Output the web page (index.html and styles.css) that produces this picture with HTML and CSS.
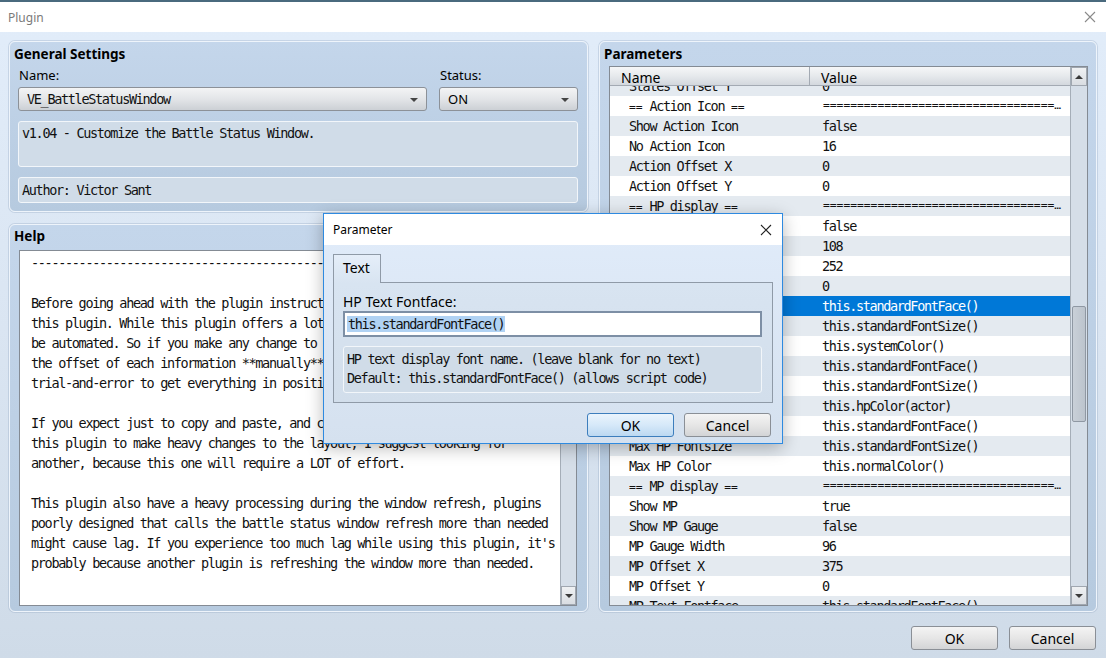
FILE: index.html
```html
<!DOCTYPE html>
<html>
<head>
<meta charset="utf-8">
<link rel="stylesheet" href="styles.css">
</head>
<body>
<div class="titlebar">
  <span class="title-text">Plugin</span>
  <svg class="close" width="12" height="12" viewBox="0 0 12 12"><path d="M1 1L11 11M11 1L1 11" stroke="#8a8a8a" stroke-width="1.1" fill="none"/></svg>
</div>
<div class="content">
  <div class="left">
    <section class="panel general">
      <div class="panel-title">General Settings</div>
      <div class="fields">
        <div class="field name-field">
          <div class="label">Name:</div>
          <div class="combo mono">VE_BattleStatusWindow<span class="drop"></span></div>
        </div>
        <div class="field status-field">
          <div class="label">Status:</div>
          <div class="combo">ON<span class="drop"></span></div>
        </div>
      </div>
      <div class="infobox desc mono">v1.04 - Customize the Battle Status Window.</div>
      <div class="infobox author mono">Author: Victor Sant</div>
    </section>
    <section class="panel help">
      <div class="panel-title">Help</div>
      <div class="textarea">
        <div class="help-text mono">----------------------------------------------------------------------------

Before going ahead with the plugin instructions, it's important to know that
this plugin. While this plugin offers a lot of options, many things can't
be automated. So if you make any change to the layout, you will need to set
the offset of each information **manually**. So be prepared to do a lot of
trial-and-error to get everything in position.

If you expect just to copy and paste, and change a few values, or want to use
this plugin to make heavy changes to the layout, I suggest looking for
another, because this one will require a LOT of effort.

This plugin also have a heavy processing during the window refresh, plugins
poorly designed that calls the battle status window refresh more than needed
might cause lag. If you experience too much lag while using this plugin, it's
probably because another plugin is refreshing the window more than needed.</div>
        <div class="vscroll small">
          <div class="track"></div>
          <div class="sbtn"><span class="tri down"></span></div>
        </div>
      </div>
    </section>
  </div>
  <section class="panel params">
    <div class="panel-title">Parameters</div>
    <div class="table">
      <div class="table-main">
        <div class="thead">
          <div class="th th-name">Name</div>
          <div class="th th-value">Value</div>
        </div>
        <div class="tbody mono">
          <div class="rows">
            <div class="row alt"><span class="c-name">States Offset Y</span><span class="c-val">0</span></div>
            <div class="row"><span class="c-name"><span class="eq">==</span> Action Icon <span class="eq">==</span></span><span class="c-val eq">============================================================</span></div>
            <div class="row alt"><span class="c-name">Show Action Icon</span><span class="c-val">false</span></div>
            <div class="row"><span class="c-name">No Action Icon</span><span class="c-val">16</span></div>
            <div class="row alt"><span class="c-name">Action Offset X</span><span class="c-val">0</span></div>
            <div class="row"><span class="c-name">Action Offset Y</span><span class="c-val">0</span></div>
            <div class="row alt"><span class="c-name"><span class="eq">==</span> HP display <span class="eq">==</span></span><span class="c-val eq">============================================================</span></div>
            <div class="row"><span class="c-name">Show HP Gauge</span><span class="c-val">false</span></div>
            <div class="row alt"><span class="c-name">HP Gauge Width</span><span class="c-val">108</span></div>
            <div class="row"><span class="c-name">HP Offset X</span><span class="c-val">252</span></div>
            <div class="row alt"><span class="c-name">HP Offset Y</span><span class="c-val">0</span></div>
            <div class="row selected"><span class="c-name">HP Text Fontface</span><span class="c-val">this.standardFontFace()</span></div>
            <div class="row alt"><span class="c-name">HP Text Fontsize</span><span class="c-val">this.standardFontSize()</span></div>
            <div class="row"><span class="c-name">HP Text Color</span><span class="c-val">this.systemColor()</span></div>
            <div class="row alt"><span class="c-name">HP Value Fontface</span><span class="c-val">this.standardFontFace()</span></div>
            <div class="row"><span class="c-name">HP Value Fontsize</span><span class="c-val">this.standardFontSize()</span></div>
            <div class="row alt"><span class="c-name">HP Value Color</span><span class="c-val">this.hpColor(actor)</span></div>
            <div class="row"><span class="c-name">Max HP Fontface</span><span class="c-val">this.standardFontFace()</span></div>
            <div class="row alt"><span class="c-name">Max HP Fontsize</span><span class="c-val">this.standardFontSize()</span></div>
            <div class="row"><span class="c-name">Max HP Color</span><span class="c-val">this.normalColor()</span></div>
            <div class="row alt"><span class="c-name"><span class="eq">==</span> MP display <span class="eq">==</span></span><span class="c-val eq">============================================================</span></div>
            <div class="row"><span class="c-name">Show MP</span><span class="c-val">true</span></div>
            <div class="row alt"><span class="c-name">Show MP Gauge</span><span class="c-val">false</span></div>
            <div class="row"><span class="c-name">MP Gauge Width</span><span class="c-val">96</span></div>
            <div class="row alt"><span class="c-name">MP Offset X</span><span class="c-val">375</span></div>
            <div class="row"><span class="c-name">MP Offset Y</span><span class="c-val">0</span></div>
            <div class="row alt"><span class="c-name">MP Text Fontface</span><span class="c-val">this.standardFontFace()</span></div>
          </div>
        </div>
      </div>
      <div class="vscroll">
        <div class="sbtn"><span class="tri up"></span></div>
        <div class="track"><div class="thumb"></div></div>
        <div class="sbtn"><span class="tri down"></span></div>
      </div>
    </div>
  </section>
</div>
<div class="footer">
  <button class="btn">OK</button>
  <button class="btn">Cancel</button>
</div>

<div class="dialog">
  <div class="dlg-titlebar">
    <span class="dlg-title">Parameter</span>
    <svg class="close" width="12" height="12" viewBox="0 0 12 12"><path d="M1 1L11 11M11 1L1 11" stroke="#222" stroke-width="1.1" fill="none"/></svg>
  </div>
  <div class="dlg-body">
    <div class="tabs"><div class="tab">Text</div></div>
    <div class="tabpanel">
      <div class="dlg-label">HP Text Fontface:</div>
      <div class="input mono"><span class="sel">this.standardFontFace()</span></div>
      <div class="infobox dlg-desc mono">HP text display font name. (leave blank for no text)
Default: this.standardFontFace() (allows script code)</div>
    </div>
    <div class="dlg-buttons">
      <button class="btn default">OK</button>
      <button class="btn">Cancel</button>
    </div>
  </div>
</div>
</body>
</html>
```

FILE: styles.css
```css
* { box-sizing: border-box; }
html, body { margin: 0; padding: 0; }
body {
  width: 1106px;
  height: 658px;
  overflow: hidden;
  position: relative;
  font-family: "Noto Sans", "Open Sans", sans-serif;
  color: #000;
  background: linear-gradient(#e2edfa 0%, #dae5f2 50%, #cfdbe8 100%);
}
.mono {
  font-family: "DejaVu Sans Mono", monospace;
  font-size: 13.5px;
  letter-spacing: -1.33px;
  color: #111;
}
.eq {
  font-size: 11.3px;
  letter-spacing: 0;
}
.titlebar {
  height: 32px;
  background: #fff;
  border-top: 2px solid #4a6a7e;
  display: flex;
  align-items: center;
  justify-content: space-between;
  padding: 0 10px 0 8px;
}
.title-text { font-size: 12px; color: #7a7a7a; }
.content {
  display: flex;
  gap: 11px;
  padding: 9px 9px 0 9px;
  height: 580px;
}
.left {
  width: 579px;
  display: flex;
  flex-direction: column;
  gap: 12px;
}
.panel {
  background: linear-gradient(#c4d6eb, #b6cadf);
  border: 1px solid #eef4fb;
  border-radius: 6px;
  box-shadow: 0 0 0 1px rgba(150,170,195,0.35);
}
.panel-title {
  font-weight: 700;
  font-size: 13.5px;
  height: 24px;
  line-height: 24px;
  margin-left: -4px;
}
.general { height: 171px; padding: 0 9px 8px 8px; }
.fields { display: flex; gap: 12px; }
.name-field { width: 409px; }
.status-field { width: 139px; }
.label { font-size: 13px; height: 20px; line-height: 18px; padding-left: 1px; }
.combo {
  height: 24px;
  margin-top: 1px;
  border: 1px solid #8c9198;
  border-radius: 3px;
  background: linear-gradient(#f3f4f5, #e3e5e8 50%, #ccd0d5);
  padding-left: 8px;
  line-height: 22px;
  font-size: 13px;
  position: relative;
}
.combo.mono { font-size: 13.5px; }
.drop {
  position: absolute;
  right: 8px;
  top: 10px;
  width: 0; height: 0;
  border-left: 4px solid transparent;
  border-right: 4px solid transparent;
  border-top: 4px solid #444;
}
.infobox {
  background: #d0dce8;
  border: 1px solid #f2f6fa;
  border-radius: 3px;
  padding: 1px 3px;
  line-height: 20px;
}
.desc { height: 46px; margin-top: 10px; }
.author { height: 26px; margin-top: 10px; line-height: 23px; }
.help { flex: none; height: 388px; padding: 0 10px 5px 9px; }
.help .panel-title { height: 25px; line-height: 23px; margin-left: -5px; }
.textarea {
  height: 356px;
  background: #fff;
  border: 1px solid #848b94;
  display: flex;
}
.help-text {
  flex: 1;
  white-space: pre;
  overflow: hidden;
  line-height: 20px;
  padding: 2px 0 0 11px;
}
.vscroll {
  width: 17px;
  display: flex;
  flex-direction: column;
  background: #d5dee8;
  border-left: 1px solid #a5aeb8;
}
.vscroll.small { width: 16px; }
.track { flex: 1; position: relative; }
.sbtn {
  height: 19px;
  background: linear-gradient(#eff1f3, #d9dde2);
  border: 1px solid #a0a7b0;
  display: flex;
  align-items: center;
  justify-content: center;
}
.tri { width: 0; height: 0; border-left: 4px solid transparent; border-right: 4px solid transparent; }
.tri.up { border-bottom: 4px solid #3a3a3a; }
.tri.down { border-top: 4px solid #3a3a3a; }
.thumb {
  position: absolute;
  left: 1px; right: 1px;
  top: 220px;
  height: 116px;
  background: linear-gradient(90deg, #c9d0d8, #bcc4cd);
  border: 1px solid #8f98a3;
  border-radius: 2px;
}
.params { width: 498px; height: 571px; padding: 0 8px 5px 9px; }
.params .panel-title { margin-left: -5px; }
.table {
  height: 540px;
  border: 1px solid #848b94;
  background: #fff;
  display: flex;
}
.table-main { flex: 1; display: flex; flex-direction: column; min-width: 0; }
.thead {
  height: 19px;
  display: flex;
  background: linear-gradient(#f6f7f8, #e6e9ec 50%, #d3d8de);
  border-bottom: 1px solid #a3aab3;
  font-size: 14px;
  line-height: 21px;
  position: relative;
  z-index: 1;
}
.th { padding-left: 11px; }
.th-name { width: 200px; border-right: 1px solid #a3aab3; }
.th-value { flex: 1; }
.tbody { flex: 1; overflow: hidden; }
.rows { margin-top: -10px; }
.row { display: flex; height: 20px; line-height: 20px; background: #fff; white-space: nowrap; }
.row.alt { background: #e4eaf0; }
.row.selected { background: #0078d7; color: #fff; }
.c-name { width: 200px; padding-left: 19px; overflow: hidden; }
.c-val { display: block; flex: 1; min-width: 0; padding-left: 12px; padding-right: 3px; overflow: hidden; text-overflow: ellipsis; }
.c-val.eq { padding-left: 13px; }
.footer {
  display: flex;
  justify-content: flex-end;
  gap: 11px;
  padding: 14px 10px 0 0;
}
.btn {
  width: 87px;
  height: 24px;
  font-family: "Noto Sans", "Open Sans", sans-serif;
  font-size: 14px;
  color: #000;
  border: 1px solid #8a8f96;
  border-radius: 3px;
  background: linear-gradient(#f4f4f4, #e6e6e6 50%, #d3d4d6);
  padding: 0;
}
.btn.default {
  border-color: #3d7ebd;
  background: linear-gradient(#eaf4fd, #d6e9f9 50%, #bcd8f1);
}
.dialog {
  position: absolute;
  left: 323px;
  top: 213px;
  width: 460px;
  height: 231px;
  border: 1px solid #2e8ae0;
  background: linear-gradient(#e1ecfa, #d5e1ef);
  box-shadow: 0 4px 16px rgba(0,0,0,0.28);
}
.dlg-titlebar {
  height: 31px;
  background: #fff;
  display: flex;
  align-items: center;
  justify-content: space-between;
  padding: 0 10px 0 9px;
}
.dlg-title { font-size: 12px; color: #000; }
.dlg-body { padding: 9px 9px 0 9px; }
.tabs { display: flex; height: 29px; position: relative; z-index: 1; }
.tab {
  width: 48px;
  height: 29px;
  border: 1px solid #8f9aa7;
  border-bottom: none;
  background: linear-gradient(#e5eef9, #d8e4f1);
  font-size: 14px;
  line-height: 26px;
  padding-left: 9px;
}
.tabpanel {
  height: 121px;
  margin-top: -1px;
  border: 1px solid #8f9aa7;
  background: linear-gradient(#d8e4f1, #d2deeb);
  padding: 8px 10px 0 9px;
}
.dlg-label { font-size: 14px; height: 20px; line-height: 22px; }
.input {
  height: 26px;
  background: #fff;
  border: 2px solid #7d8fa5;
  padding: 2px 0 0 2px;
  line-height: 19px;
}
.sel { background: #b0d2f3; padding: 0 1px; }
.dlg-desc {
  margin-top: 9px;
  height: 47px;
  white-space: pre;
  line-height: 19px;
  padding: 3px 3px 0 3px;
}
.dlg-buttons {
  display: flex;
  justify-content: flex-end;
  gap: 10px;
  padding: 10px 2px 0 0;
}
.dlg-buttons .btn { width: 87px; }
```
